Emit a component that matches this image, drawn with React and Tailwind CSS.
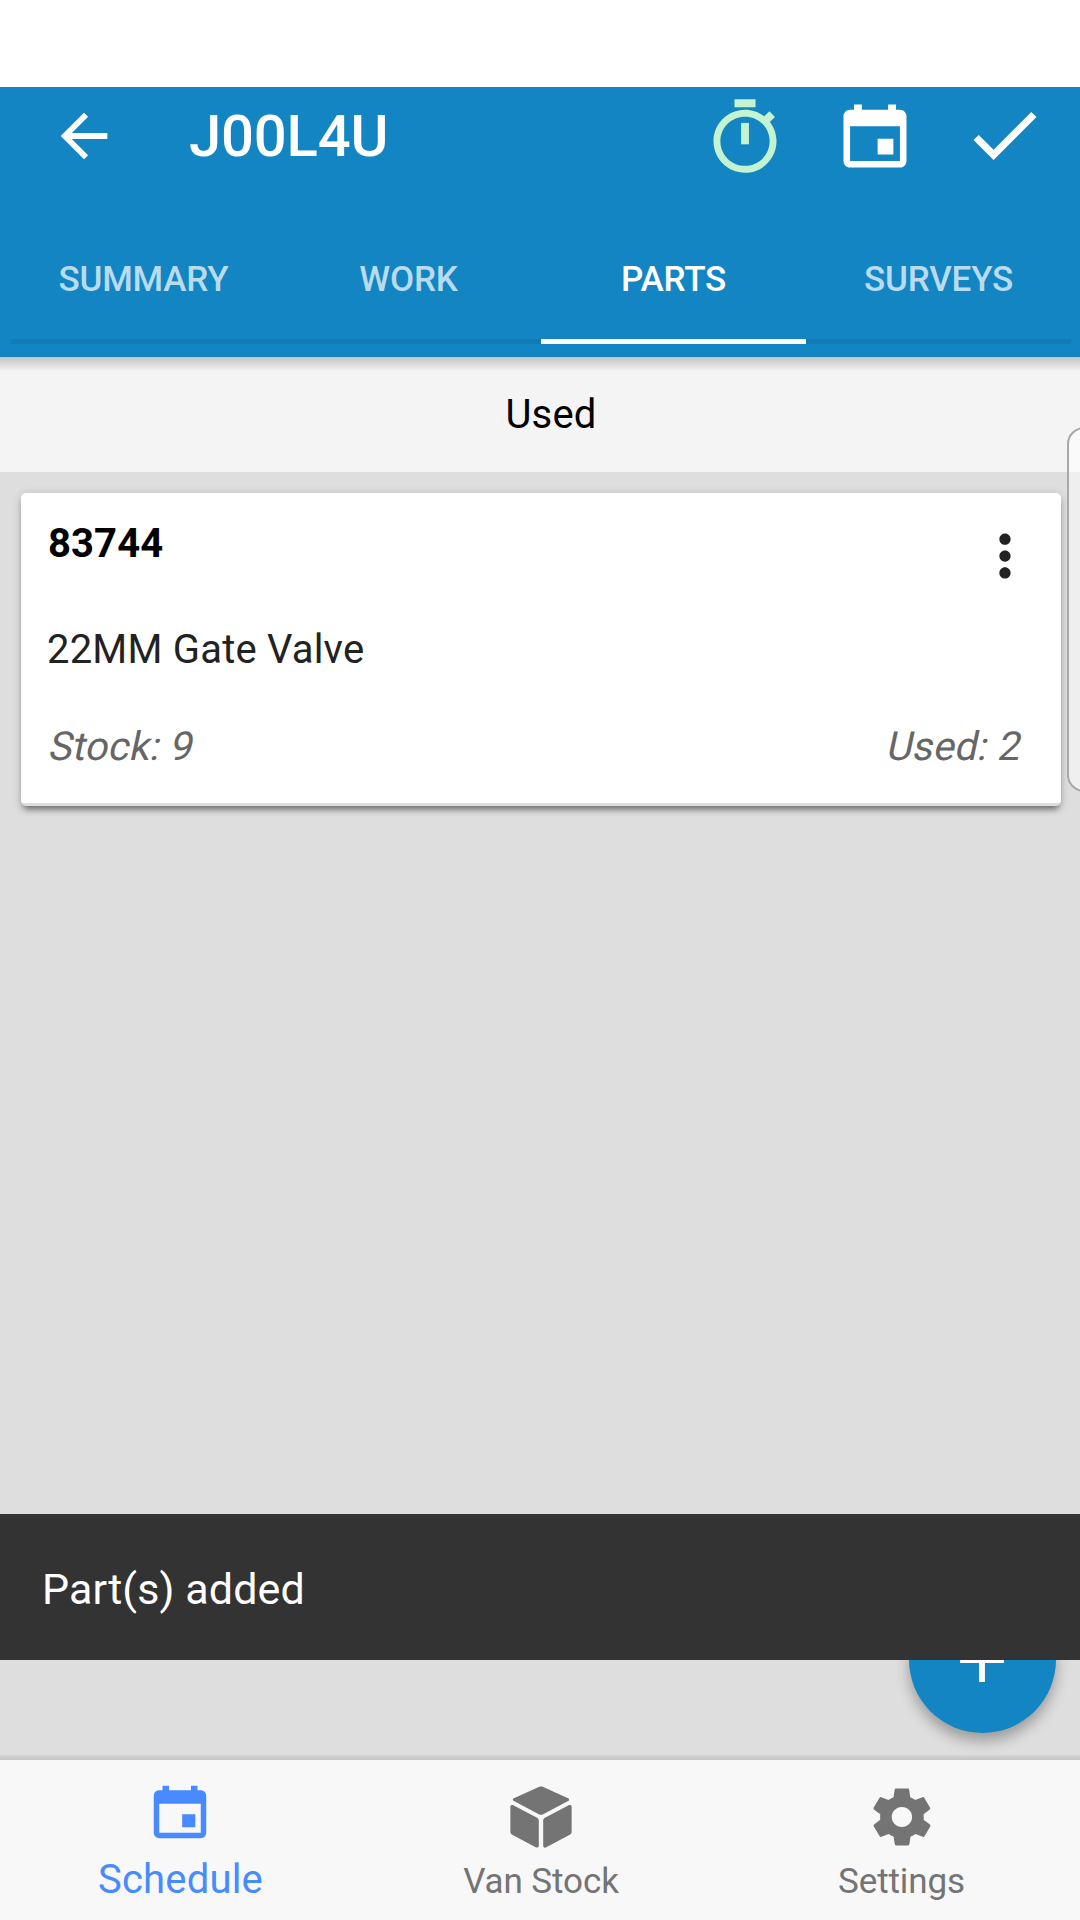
import {
  IoMdAdd,
  IoMdCalendar,
  IoMdCheckmark,
  IoMdCube,
  IoMdMore,
  IoMdSettings,
  IoMdStopwatch,
} from "react-icons/io";
import { MdArrowBack } from "react-icons/md";

const tabs = ["SUMMARY", "WORK", "PARTS", "SURVEYS"];

const parts = [{ code: "83744", name: "22MM Gate Valve", stock: 9, used: 2 }];

function Header({ activeTab }) {
  return (
    <header className="relative z-10 h-[270px] bg-[#1485c3] text-white">
      <div className="flex h-[97px] items-center pl-[49px] pr-[33px]">
        <button aria-label="Back">
          <MdArrowBack className="size-[70px]" />
        </button>
        <h1 className="ml-[70px] flex-1 text-[58px] leading-[64px] font-medium tracking-[-0.2px]">
          J00L4U
        </h1>
        <div className="flex gap-[46px]">
          <IoMdStopwatch className="size-[84px] text-[#c3f3d0]" />
          <IoMdCalendar className="size-[84px]" />
          <IoMdCheckmark className="size-[84px]" />
        </div>
      </div>

      <nav className="mt-[15px] ml-[11px] mr-[9px] grid h-[145px] grid-cols-4">
        {tabs.map((tab) => (
          <button
            key={tab}
            className={
              tab === activeTab
                ? "border-b-[5px] border-white pt-[22px] text-[35px] font-medium tracking-[-0.2px]"
                : "border-b-[5px] border-[#137ab4] pt-[22px] text-[35px] font-medium tracking-[-0.2px] text-[#b9dbee]"
            }
          >
            {tab}
          </button>
        ))}
      </nav>

      {/* Drop shadow strip */}
      <div className="absolute top-full left-0 h-[13px] w-full bg-linear-to-b from-black/20 to-black/2" />
    </header>
  );
}

function PartCard({ part }) {
  return (
    <div className="mx-[21px] mr-[19px] h-[313px] rounded-[5px] border-b-[3px] border-[#dedede] bg-white pl-[27px] pr-[40px] shadow-[0_6px_6px_-3px_rgba(0,0,0,0.45),0_2px_10px_rgba(0,0,0,0.2)]">
      <div className="flex h-[120px] justify-between">
        <span className="pt-[27px] text-[40px] leading-[48px] font-bold tracking-[0.1px] text-black">
          {part.code}
        </span>
        <IoMdMore className="mt-[26.5px] -mr-[20px] size-[72px] text-[#222]" />
      </div>
      <p className="mt-[13px] -ml-px text-[40px] leading-[48px] tracking-[0.2px] text-[#222]">{part.name}</p>
      <div className="mt-[49px] flex justify-between pr-[2.5px] text-[40px] leading-[48px] tracking-[0.2px] text-[#666]">
        <span className="-ml-px origin-[50%_38px] -skew-x-12">Stock: {part.stock}</span>
        <span className="origin-[50%_38px] -skew-x-12">Used: {part.used}</span>
      </div>
    </div>
  );
}

function BottomNav() {
  return (
    <nav className="relative grid h-[160px] grid-cols-3 bg-[#f8f8f8] text-[#747474]">
      <div className="absolute bottom-full left-0 h-[5px] w-full bg-linear-to-b from-black/4 to-black/12" />
      <button className="flex flex-col items-center pt-[17px] text-[#488aff]">
        <IoMdCalendar className="size-[70px]" />
        <span className="mt-[9px] ml-px text-[40px] leading-[48px] tracking-[0.2px]">Schedule</span>
      </button>
      <button className="flex flex-col items-center pt-[22px] pl-[2px]">
        <IoMdCube className="size-[70px]" />
        <span className="mt-[8px] text-[35px] leading-[44px] tracking-[-0.1px]">Van Stock</span>
      </button>
      <button className="flex flex-col items-center pt-[22px] pl-[3px]">
        <IoMdSettings className="size-[70px]" />
        <span className="mt-[8px] text-[35px] leading-[44px] tracking-[-0.1px]">Settings</span>
      </button>
    </nav>
  );
}

export default function App() {
  return (
    <div className="relative flex h-[1920px] w-[1080px] flex-col overflow-hidden bg-[#dedede] font-[Roboto,sans-serif]">
      <div className="h-[87px] shrink-0 bg-white" />
      <Header activeTab="PARTS" />

      <main className="flex-1">
        <div className="mb-[21px] flex h-[115px] items-center justify-center bg-[#f4f4f4] pl-[22px] text-[40px] tracking-[0.2px] text-black">
          Used
        </div>
        {parts.map((part) => (
          <PartCard key={part.code} part={part} />
        ))}
      </main>

      <BottomNav />

      {/* Add part */}
      <button
        aria-label="Add part"
        className="absolute right-[24px] bottom-[187px] flex size-[147px] items-center justify-center rounded-full bg-[#1485c3] pr-px text-white shadow-[0_8px_14px_rgba(0,0,0,0.3)]"
      >
        <IoMdAdd className="size-[70px]" />
      </button>

      {/* Toast */}
      <div className="absolute bottom-[260px] left-0 flex h-[146px] w-full items-center bg-[#333] pl-[42px] pt-[4px] text-[43px] tracking-[0.1px] text-white">
        Part(s) added
      </div>

      {/* Edge panel handle */}
      <div className="absolute top-[427px] -right-[21px] h-[365px] w-[34px] rounded-[20px] border-2 border-[#a8a8a8] bg-white/50" />
    </div>
  );
}
